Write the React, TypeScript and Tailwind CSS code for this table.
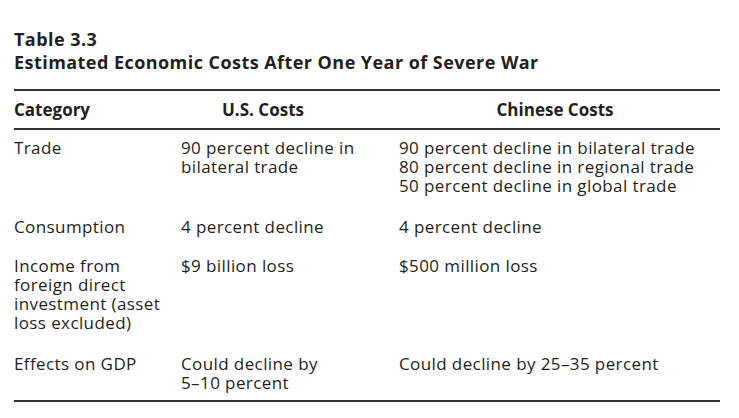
const rows = [
  {
    cat: ['Trade'],
    us: ['90 percent decline in', 'bilateral trade'],
    cn: ['90 percent decline in bilateral trade', '80 percent decline in regional trade', '50 percent decline in global trade'],
    gap: 'pb-[22px]',
  },
  { cat: ['Consumption'], us: ['4 percent decline'], cn: ['4 percent decline'], gap: 'pb-[20px]' },
  {
    cat: ['Income from', 'foreign direct', 'investment (asset', 'loss excluded)'],
    us: ['$9 billion loss'],
    cn: ['$500 million loss'],
    gap: 'pb-[22px]',
  },
  { cat: ['Effects on GDP'], us: ['Could decline by', '5–10 percent'], cn: ['Could decline by 25–35 percent'], gap: '' },
];

function Lines({ items }: { items: string[] }) {
  return (
    <div>
      {items.map((t) => (
        <div key={t} className="whitespace-nowrap">{t}</div>
      ))}
    </div>
  );
}

export default function App() {
  return (
    <div className="w-[739px] h-[418px] bg-white text-[#231f20] font-['Open_Sans',sans-serif] pl-[14px] pr-[19px] pt-[28px]">
      <div className="text-[18px] leading-[23px] font-bold tracking-[0.45px]">
        <div>Table 3.3</div>
        <div>Estimated Economic Costs After One Year of Severe War</div>
      </div>

      <div className="mt-[15px] border-t-2 border-[#333]">
        {/* header */}
        <div className="grid grid-cols-[167px_218px_1fr] border-b-2 border-[#333] py-[8px] text-[17px] leading-[21px] font-bold">
          <div>Category</div>
          <div className="w-[164px] text-center">U.S. Costs</div>
          <div className="w-[312px] text-center">Chinese Costs</div>
        </div>

        <div className="border-b-2 border-[#333] pt-[8px] pb-[8px] text-[17px] leading-[19px] tracking-[0.4px]">
          {rows.map((r, i) => (
            <div key={i} className={`grid grid-cols-[167px_218px_1fr] ${r.gap}`}>
              <Lines items={r.cat} />
              <Lines items={r.us} />
              <Lines items={r.cn} />
            </div>
          ))}
        </div>
      </div>
    </div>
  );
}
